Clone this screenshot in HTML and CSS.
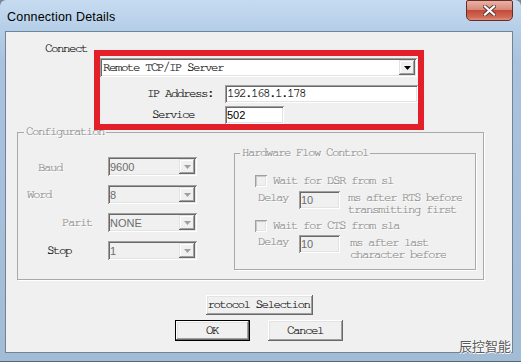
FILE: index.html
```html
<!DOCTYPE html>
<html lang="en">

<head>
    <meta charset="UTF-8">
    <title>Connection Details</title>

    <link rel="stylesheet" href="styles.css">
</head>

<body>
    <div class="window">
        <div class="titlebar">
            <span class="title">Connection Details</span>
            <span class="close">
                <svg width="13" height="11" viewBox="0 0 13 11">
                    <path d="M2 1.5 L11 9.5 M11 1.5 L2 9.5" stroke="#5a3a36" stroke-width="4" stroke-linecap="square"/>
                    <path d="M2 1.5 L11 9.5 M11 1.5 L2 9.5" stroke="#fff" stroke-width="2.2" stroke-linecap="square"/>
                </svg>
            </span>
        </div>

        <div class="client">
            <div class="connect">
                <span class="connect-lbl">Connect</span>
                <div class="mark">
                    <div class="combo wide">
                        <span class="val">Remote TCP/IP Server</span>
                        <span class="drop"><svg width="7" height="4"><polygon points="0,0 7,0 3.5,4" fill="#000"/></svg></span>
                    </div>
                    <div class="field-row ip-row">
                        <span class="ip-lbl">IP Address:</span>
                        <span class="edit ip">192.168.1.178</span>
                    </div>
                    <div class="field-row svc-row">
                        <span class="svc-lbl">Service</span>
                        <span class="edit svc">502</span>
                    </div>
                </div>
            </div>

            <fieldset class="group config">
                <legend class="dim">Configuration</legend>
                <div class="config-body">
                    <div class="serial">
                        <span class="dim lbl-baud">Baud</span>
                        <div class="combo sm"><span class="val">9600</span><span class="drop"><svg width="7" height="4"><polygon points="0,0 7,0 3.5,4" fill="#a0a0a0"/></svg></span></div>
                        <span class="dim lbl-word">Word</span>
                        <div class="combo sm"><span class="val">8</span><span class="drop"><svg width="7" height="4"><polygon points="0,0 7,0 3.5,4" fill="#a0a0a0"/></svg></span></div>
                        <span class="dim lbl-parit">Parit</span>
                        <div class="combo sm"><span class="val">NONE</span><span class="drop"><svg width="7" height="4"><polygon points="0,0 7,0 3.5,4" fill="#a0a0a0"/></svg></span></div>
                        <span class="lbl-stop">Stop</span>
                        <div class="combo sm"><span class="val">1</span><span class="drop"><svg width="7" height="4"><polygon points="0,0 7,0 3.5,4" fill="#a0a0a0"/></svg></span></div>
                    </div>

                    <fieldset class="group hw">
                        <legend class="dim">Hardware Flow Control</legend>
                        <div class="check-row first">
                            <span class="box"></span>
                            <span class="dim">Wait for DSR from sl</span>
                        </div>
                        <div class="delay-row">
                            <span class="dim delay-lbl">Delay</span>
                            <span class="edit dis">10</span>
                            <div class="dim note">
                                <span class="line">ms after RTS before</span>
                                <span class="line">transmitting first</span>
                            </div>
                        </div>
                        <div class="check-row second">
                            <span class="box"></span>
                            <span class="dim">Wait for CTS from sla</span>
                        </div>
                        <div class="delay-row last">
                            <span class="dim delay-lbl">Delay</span>
                            <span class="edit dis">10</span>
                            <div class="dim note">
                                <span class="line">ms after last</span>
                                <span class="line">character before</span>
                            </div>
                        </div>
                    </fieldset>
                </div>
            </fieldset>

            <div class="buttons">
                <span class="btn proto">rotocol Selection</span>
                <div class="btn-row">
                    <span class="btn ok">OK</span>
                    <span class="btn">Cancel</span>
                </div>
            </div>

            <span class="watermark">辰控智能</span>
        </div>
    </div>
</body>

</html>
```

FILE: styles.css
```css
/* 对话框 521x362 */
* {
    margin: 0;
    padding: 0;
    box-sizing: border-box;
}

html {
    background: #7a8896;
}

body {
    width: 521px;
    height: 362px;
    overflow: hidden;
    font-family: "Nimbus Mono PS", "FreeMono", "Liberation Mono", monospace;
    font-size: 12.5px;
    letter-spacing: -1.5px;
    line-height: 12px;
    color: #000;
    -webkit-text-stroke: 0.15px;
}

.window {
    height: 362px;
    display: flex;
    flex-direction: column;
    border-radius: 6px 6px 0 0;
    background: linear-gradient(#c6dbf0, #b6cfe8 28px, #a9c3de 60px, #a3bcd6);
    box-shadow: inset 0 -1px 0 #56677a;
}

/* 标题栏 */
.titlebar {
    height: 31px;
    display: flex;
    align-items: flex-start;
}

.title {
    margin: 10px 0 0 7px;
    font-family: "Liberation Sans", sans-serif;
    font-size: 12.5px;
    letter-spacing: 0.2px;
    line-height: 14px;
    -webkit-text-stroke: 0;
}

.close {
    margin: 0 8px 0 auto;
    width: 47px;
    height: 21px;
    display: flex;
    align-items: center;
    justify-content: center;
    border: 1px solid #6c2c24;
    border-radius: 2px 2px 5px 5px;
    background: linear-gradient(#e8b1a6, #d98a7b 45%, #c44b3a 50%, #cf6b58 85%, #de8f78);
}

.client {
    position: relative;
    flex: 1;
    margin: 0 8px 9px 5px;
    background: #f0f0f0;
    border: 1px solid #6f8399;
}

/* 连接 */
.connect {
    display: flex;
    align-items: flex-start;
    padding: 11px 0 0 39px;
}

.connect-lbl {
    width: 49px;
}

.mark {
    position: relative;
    z-index: 1;
    margin-top: 7px;
    width: 330px;
    height: 80px;
    border: 6px solid #e3202a;
    padding-top: 2px;
}

.combo {
    display: flex;
    align-items: center;
    padding: 2px;
    box-shadow: inset 1px 1px 0 #a0a0a0, inset -1px -1px 0 #fff, inset 2px 2px 0 #696969, inset -2px -2px 0 #e3e3e3;
}

.combo .val {
    flex: 1;
    line-height: 14px;
}

.drop {
    width: 16px;
    height: 15px;
    display: flex;
    align-items: center;
    justify-content: center;
    background: #f0f0f0;
    box-shadow: inset -1px -1px 0 #696969, inset 1px 1px 0 #e3e3e3, inset -2px -2px 0 #a0a0a0, inset 2px 2px 0 #fff;
}

.combo.wide {
    width: 317px;
    height: 19px;
    background: #fff;
}

.combo.wide .val {
    padding-left: 1px;
}

.field-row {
    display: flex;
    align-items: center;
    height: 18px;
}

.ip-row {
    margin-top: 8px;
}

.svc-row {
    margin-top: 3px;
}

.ip-lbl {
    margin-left: 47px;
    width: 78px;
}

.svc-lbl {
    margin-left: 52px;
    width: 73px;
}

.edit {
    height: 18px;
    padding: 2px 2px;
    line-height: 14px;
    background: #fff;
    box-shadow: inset 1px 1px 0 #a0a0a0, inset -1px -1px 0 #fff, inset 2px 2px 0 #696969, inset -2px -2px 0 #e3e3e3;
}

.ip {
    width: 193px;
}

.svc {
    width: 59px;
    font-family: "Liberation Sans", sans-serif;
    font-size: 11px;
    letter-spacing: 0;
    -webkit-text-stroke: 0;
}

/* 灰色(禁用)文字 */
.dim {
    color: #8a8a8a;
    text-shadow: 1px 1px 0 #fff;
}

.group {
    border: 1px solid #a9a9a9;
    box-shadow: 1px 1px 0 #fff;
}

.group legend {
    padding: 0 2px;
    line-height: 12px;
}

.config {
    margin: -4px 0 0 11px;
    width: 467px;
    padding: 0 7px 9px 0;
}

.config legend {
    margin-left: 6px;
}

.config-body {
    display: flex;
    align-items: flex-start;
}

.serial {
    display: grid;
    grid-template-columns: 90px 89px;
    row-gap: 9px;
    align-items: center;
    padding-top: 19px;
}

.lbl-baud {
    padding-left: 20px;
    margin-top: 3px;
}

.lbl-word {
    padding-left: 9px;
}

.lbl-parit {
    padding-left: 44px;
    margin-top: 1px;
}

.lbl-stop {
    padding-left: 29px;
    margin-top: 1px;
}

.combo.sm {
    height: 19px;
    padding: 2px 2px 2px 2px;
}

.combo.sm .val {
    font-family: "Liberation Sans", sans-serif;
    font-size: 11px;
    letter-spacing: 0;
    color: #6d6d6d;
    -webkit-text-stroke: 0;
}

/* 硬件流控 */
.hw {
    margin: 9px 0 0 37px;
    width: 242px;
    padding: 0 0 8px 0;
}

.hw legend {
    margin-left: 5px;
}

.check-row {
    display: flex;
    align-items: center;
    height: 12px;
    margin-left: 20px;
}

.check-row.first {
    margin-top: 16px;
}

.check-row.second {
    margin-top: 4px;
}

.box {
    width: 12px;
    height: 12px;
    margin-right: 6px;
    background: #f0f0f0;
    box-shadow: inset 1px 1px 0 #a0a0a0, inset -1px -1px 0 #fff, inset 2px 2px 0 #c8c8c8, inset -2px -2px 0 #e3e3e3;
}

.delay-row {
    display: flex;
    align-items: flex-start;
    margin: 4px 0 0 23px;
}

.delay-row.last {
    margin-top: 3px;
}

.delay-lbl {
    width: 41px;
    margin-top: 1px;
}

.edit.dis {
    width: 41px;
    background: #f0f0f0;
    font-family: "Liberation Sans", sans-serif;
    font-size: 11px;
    letter-spacing: 0;
    color: #6d6d6d;
    -webkit-text-stroke: 0;
}

.note {
    display: flex;
    flex-direction: column;
    margin: 1px 0 0 8px;
}

.note .line {
    height: 12px;
    line-height: 12px;
    overflow: hidden;
}

.delay-row.last .note {
    margin: 2px 0 0 10px;
}

/* 按钮 */
.buttons {
    display: flex;
    flex-direction: column;
    align-items: center;
    gap: 5px;
    margin-top: 15px;
}

.btn {
    display: flex;
    align-items: center;
    justify-content: center;
    width: 75px;
    height: 21px;
    background: #f0f0f0;
    box-shadow: inset -1px -1px 0 #696969, inset 1px 1px 0 #fff, inset -2px -2px 0 #a0a0a0, inset 2px 2px 0 #e3e3e3;
}

.btn.proto {
    width: 107px;
    height: 20px;
    justify-content: flex-start;
    padding-left: 2px;
    overflow: hidden;
    white-space: nowrap;
}

.btn-row {
    display: flex;
    gap: 18px;
    margin-right: 1px;
}

.btn.ok {
    border: 1px solid #000;
}

.watermark {
    position: absolute;
    right: 1px;
    bottom: -1px;
    font-family: "Noto Sans CJK SC", sans-serif;
    font-size: 13px;
    letter-spacing: 0;
    line-height: 14px;
    color: #5a5a5a;
    text-shadow: 1px 0 0 #fff, 0 1px 0 #fff;
    -webkit-text-stroke: 0;
}
```
